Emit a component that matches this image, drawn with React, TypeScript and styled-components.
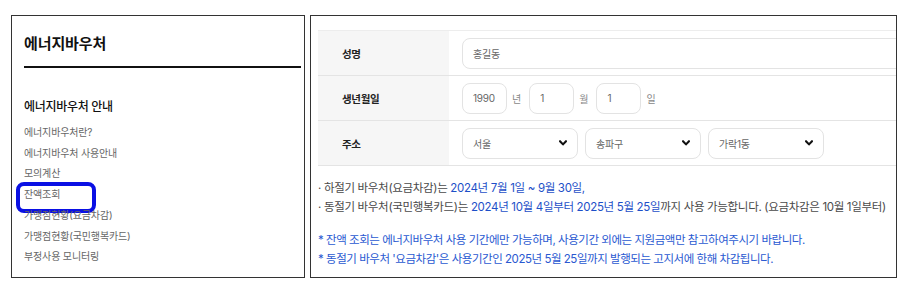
import React from "react";
import styled, { createGlobalStyle } from "styled-components";

const GlobalStyle = createGlobalStyle`
  html, body { margin: 0; padding: 0; background: #fff; }
  body { font-family: Inter, "Noto Sans CJK KR", sans-serif; color: #222; }
`;

const Page = styled.div`
  display: flex;
  align-items: flex-start;
  gap: 5px;
  padding: 15px 0 0 11px;
`;

const Sidebar = styled.nav`
  box-sizing: border-box;
  width: 294px;
  height: 263px;
  border: 1px solid #333;
  padding: 18px 3px 0 12px;
`;

const SideTitle = styled.h1`
  margin: 0;
  font-size: 15px;
  font-weight: 700;
  line-height: 20px;
  letter-spacing: -0.1px;
  color: #111;
  padding-bottom: 12px;
  border-bottom: 2px solid #111;
`;

const SideSubtitle = styled.h2`
  margin: 30px 0 0;
  font-size: 12px;
  font-weight: 500;
  line-height: 18px;
  letter-spacing: -0.3px;
  color: #111;
`;

const MenuList = styled.ul`
  list-style: none;
  margin: 6px 0 0;
  padding: 0;
`;

const MenuItem = styled.li<{ $marked?: boolean }>`
  position: relative;
  font-size: 10px;
  line-height: 20.7px;
  letter-spacing: -0.15px;
  color: #666;
  ${(p) =>
    p.$marked &&
    `
    &::after {
      content: "";
      position: absolute;
      left: -8px;
      top: -2px;
      width: 80px;
      height: 31px;
      box-sizing: border-box;
      border: 4px solid #0a10e4;
      border-radius: 8px;
    }
  `}
`;

const Main = styled.section`
  box-sizing: border-box;
  width: 587px;
  height: 263px;
  border: 1px solid #333;
  padding: 14px 0 0 7px;
  overflow: hidden;
`;

const Table = styled.div`
  border-top: 1px solid #ededed;
`;

const Row = styled.div`
  display: flex;
  height: 44px;
  border-bottom: 1px solid #e4e4e4;
`;

const Label = styled.div`
  flex: 0 0 107px;
  background: #f6f6f6;
  padding-left: 24px;
  display: flex;
  align-items: center;
  font-size: 10.5px;
  font-weight: 700;
  letter-spacing: -0.3px;
  color: #222;
`;

const Value = styled.div`
  flex: 1;
  display: flex;
  align-items: center;
  padding-left: 13px;
  background: #fff;
  min-width: 0;
`;

const Field = styled.div<{ $w: number }>`
  box-sizing: border-box;
  flex: 0 0 ${(p) => p.$w}px;
  height: 31px;
  border: 1px solid #e3e3e3;
  border-radius: 8px;
  padding: 0 10px;
  display: flex;
  align-items: center;
  justify-content: space-between;
  font-size: 10px;
  letter-spacing: -0.2px;
  color: #666;
`;

const Unit = styled.span`
  font-size: 10px;
  color: #888;
  margin: 0 8px 0 5px;
`;

const SelectGroup = styled.div`
  display: flex;
  gap: 7px;
`;

const Notice = styled.div`
  margin-top: 13px;
  font-size: 11.5px;
  letter-spacing: -0.32px;
  line-height: 19.3px;
`;

const Line = styled.p<{ $blue?: boolean }>`
  margin: 0;
  white-space: nowrap;
  color: ${(p) => (p.$blue ? "#2a59d1" : "#4a4a4a")};
  letter-spacing: ${(p) => (p.$blue ? "-0.46px" : "-0.32px")};
`;

const Em = styled.span`
  color: #1d4fc8;
`;

const Spacer = styled.div`
  height: 13px;
`;

const Chevron = () => (
  <svg width="8" height="6" viewBox="0 0 8 6" aria-hidden="true">
    <path d="M1 1.2 L4 4.4 L7 1.2" fill="none" stroke="#111" strokeWidth="2.1" strokeLinecap="round" strokeLinejoin="round" />
  </svg>
);

const Select = ({ text }: { text: string }) => (
  <Field $w={116}>
    <span>{text}</span>
    <Chevron />
  </Field>
);

export default function App() {
  return (
    <>
      <GlobalStyle />
      <Page>
        <Sidebar>
          <SideTitle>에너지바우처</SideTitle>
          <SideSubtitle>에너지바우처 안내</SideSubtitle>
          <MenuList>
            <MenuItem>에너지바우처란?</MenuItem>
            <MenuItem>에너지바우처 사용안내</MenuItem>
            <MenuItem>모의계산</MenuItem>
            <MenuItem $marked>잔액조회</MenuItem>
            <MenuItem>가맹점현황(요금차감)</MenuItem>
            <MenuItem>가맹점현황(국민행복카드)</MenuItem>
            <MenuItem>부정사용 모니터링</MenuItem>
          </MenuList>
        </Sidebar>
        <Main>
          <Table>
            <Row>
              <Label>성명</Label>
              <Value>
                <Field $w={470}>홍길동</Field>
              </Value>
            </Row>
            <Row>
              <Label>생년월일</Label>
              <Value>
                <Field $w={45}>1990</Field>
                <Unit>년</Unit>
                <Field $w={45}>1</Field>
                <Unit>월</Unit>
                <Field $w={45}>1</Field>
                <Unit>일</Unit>
              </Value>
            </Row>
            <Row>
              <Label>주소</Label>
              <Value>
                <SelectGroup>
                  <Select text="서울" />
                  <Select text="송파구" />
                  <Select text="가락1동" />
                </SelectGroup>
              </Value>
            </Row>
          </Table>
          <Notice>
            <Line>
              · 하절기 바우처(요금차감)는 <Em>2024년 7월 1일 ~ 9월 30일,</Em>
            </Line>
            <Line>
              · 동절기 바우처(국민행복카드)는 <Em>2024년 10월 4일부터 2025년 5월 25일</Em>까지 사용 가능합니다. (요금차감은 10월 1일부터)
            </Line>
            <Spacer />
            <Line $blue>* 잔액 조회는 에너지바우처 사용 기간에만 가능하며, 사용기간 외에는 지원금액만 참고하여주시기 바랍니다.</Line>
            <Line $blue>* 동절기 바우처 '요금차감'은 사용기간인 2025년 5월 25일까지 발행되는 고지서에 한해 차감됩니다.</Line>
          </Notice>
        </Main>
      </Page>
    </>
  );
}
